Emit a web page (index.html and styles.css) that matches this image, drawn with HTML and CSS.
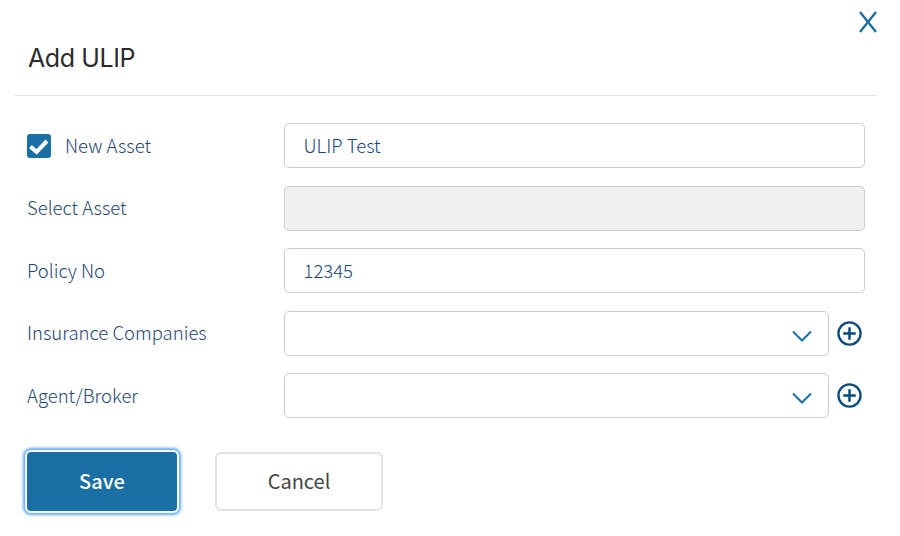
FILE: index.html
```html
<!DOCTYPE html>
<html lang="en">
<head>
<meta charset="utf-8">
<title>Add ULIP</title>
<link rel="stylesheet" href="styles.css">
</head>
<body>
<div class="modal">
  <div class="close-row">
    <svg class="close" viewBox="0 0 18 22" width="18" height="22"><path d="M1 1 L17 21 M17 1 L1 21" fill="none" stroke="#1a6fa5" stroke-width="2.4"/></svg>
  </div>
  <h1 class="title">Add ULIP</h1>
  <div class="divider"></div>
  <form class="form">
    <div class="row">
      <label class="label check-label">
        <span class="checkbox"><svg viewBox="0 0 24 24" width="24" height="24"><path d="M3.5 12.5 L9.5 18 L20 7" fill="none" stroke="#fff" stroke-width="4"/></svg></span>
        New Asset
      </label>
      <div class="field">ULIP Test</div>
    </div>
    <div class="row">
      <label class="label">Select Asset</label>
      <div class="field disabled"></div>
    </div>
    <div class="row">
      <label class="label">Policy No</label>
      <div class="field">12345</div>
    </div>
    <div class="row">
      <label class="label">Insurance Companies</label>
      <div class="field select">
        <svg class="chev" viewBox="0 0 20 12" width="20" height="12"><path d="M1 1.5 L10 10.5 L19 1.5" fill="none" stroke="#1a6fa5" stroke-width="2"/></svg>
      </div>
      <svg class="plus" viewBox="0 0 26 26" width="25" height="25"><circle cx="13" cy="13" r="11.5" fill="none" stroke="#0b4a80" stroke-width="2.4"/><path d="M6.5 13 H19.5 M13 6.5 V19.5" stroke="#0b4a80" stroke-width="2.6"/></svg>
    </div>
    <div class="row">
      <label class="label">Agent/Broker</label>
      <div class="field select">
        <svg class="chev" viewBox="0 0 20 12" width="20" height="12"><path d="M1 1.5 L10 10.5 L19 1.5" fill="none" stroke="#1a6fa5" stroke-width="2"/></svg>
      </div>
      <svg class="plus" viewBox="0 0 26 26" width="25" height="25"><circle cx="13" cy="13" r="11.5" fill="none" stroke="#0b4a80" stroke-width="2.4"/><path d="M6.5 13 H19.5 M13 6.5 V19.5" stroke="#0b4a80" stroke-width="2.6"/></svg>
    </div>
    <div class="actions">
      <button type="button" class="btn save">Save</button>
      <button type="button" class="btn cancel">Cancel</button>
    </div>
  </form>
</div>
</body>
</html>
```
FILE: styles.css
```css
html, body {
  margin: 0;
  padding: 0;
  background: #fff;
}
body {
  width: 900px;
  height: 536px;
  overflow: hidden;
  font-family: "Noto Sans CJK SC", "Noto Sans", sans-serif;
  font-size: 18.5px;
  color: #24466f;
}
.modal {
  box-sizing: border-box;
  width: 900px;
  height: 536px;
  padding: 0 23px 0 15px;
}
.close-row {
  display: flex;
  justify-content: flex-end;
  padding-top: 11px;
  height: 22px;
}
.title {
  margin: 10px 0 0 13px;
  height: 52px;
  font-family: "Inter", "Open Sans", sans-serif;
  font-size: 25px;
  font-weight: 400;
  letter-spacing: -0.4px;
  line-height: 30px;
  color: #2b2b2b;
}
.divider {
  height: 1px;
  background: #e2e2e2;
}
.form {
  display: flex;
  flex-direction: column;
  gap: 17.5px;
  padding-top: 27px;
  padding-left: 12px;
}
.row {
  display: flex;
  align-items: center;
  width: 838px;
}
.label {
  flex: 0 0 257px;
  display: flex;
  align-items: center;
  line-height: 24px;
  height: 24px;
  margin-bottom: 2px;
  color: #24466f;
  box-sizing: border-box;
  font-weight: 300;
}
.checkbox {
  width: 24px;
  height: 24px;
  margin-top: 2px;
  border-radius: 3px;
  background: #1a6fa5;
  margin-right: 14px;
  display: block;
}
.checkbox svg {
  display: block;
}
.field {
  flex: 1;
  box-sizing: border-box;
  height: 45px;
  border: 1px solid #ccc;
  border-radius: 5px;
  padding: 0 18.5px 2px 18.5px;
  display: flex;
  align-items: center;
  line-height: 24px;
  color: #164579;
  font-weight: 300;
  background: #fff;
}
.disabled {
  background: #f0f0f0;
}
.select {
  justify-content: flex-end;
  padding: 0 16px 0 0;
}
.chev {
  margin-top: 5px;
}
.plus {
  margin-left: 8px;
  margin-right: 3px;
  flex: none;
}
.actions {
  display: flex;
  align-items: center;
  gap: 36px;
  margin: 14px 0 0 -2px;
}
.btn {
  font-family: "Noto Sans CJK SC", "Noto Sans", sans-serif;
  font-size: 20px;
  line-height: 26px;
  border-radius: 6px;
  cursor: pointer;
  padding: 0;
}
.save {
  width: 154px;
  height: 63px;
  background: #1a6fa5;
  border: 2px solid #fff;
  box-shadow: 0 0 3px 2px #5ea8fb;
  color: #fff;
  font-weight: 500;
}
.cancel {
  width: 168px;
  height: 59px;
  background: #fff;
  border: 2px solid #e4e4e4;
  color: #444;
}
```
